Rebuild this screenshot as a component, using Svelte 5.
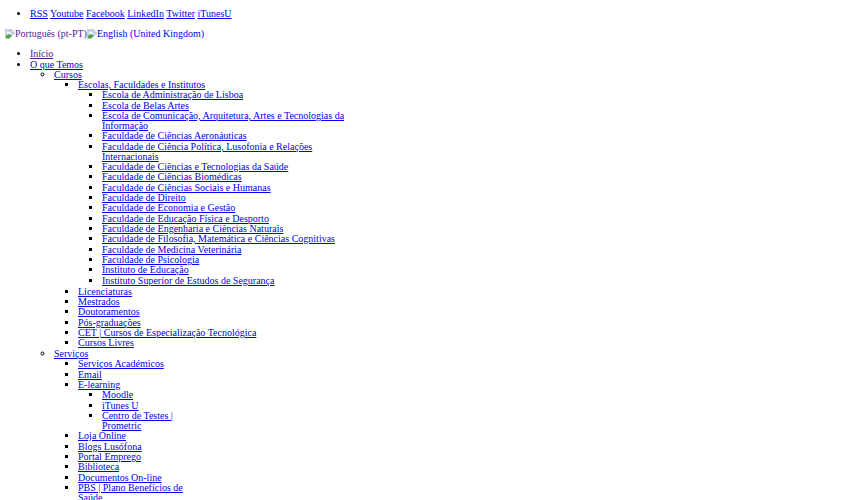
<script>
  const social = ['RSS', 'Youtube', 'Facebook', 'LinkedIn', 'Twitter', 'iTunesU'];

  const languages = [
    { label: 'Português (pt-PT)', current: true },
    { label: 'English (United Kingdom)', current: false }
  ];

  const schools = [
    'Escola de Administração de Lisboa',
    'Escola de Belas Artes',
    'Escola de Comunicação, Arquitetura, Artes e Tecnologias da Informação',
    'Faculdade de Ciências Aeronáuticas',
    'Faculdade de Ciência Política, Lusofonia e Relações Internacionais',
    'Faculdade de Ciências e Tecnologias da Saúde',
    'Faculdade de Ciências Biomédicas',
    'Faculdade de Ciências Sociais e Humanas',
    'Faculdade de Direito',
    'Faculdade de Economia e Gestão',
    'Faculdade de Educação Física e Desporto',
    'Faculdade de Engenharia e Ciências Naturais',
    'Faculdade de Filosofia, Matemática e Ciências Cognitivas',
    'Faculdade de Medicina Veterinária',
    'Faculdade de Psicologia',
    'Instituto de Educação',
    'Instituto Superior de Estudos de Segurança'
  ].map((label) => ({ label }));

  const menu = [
    { label: 'Início', current: true },
    {
      label: 'O que Temos',
      children: [
        {
          label: 'Cursos',
          children: [
            { label: 'Escolas, Faculdades e Institutos', children: schools },
            { label: 'Licenciaturas' },
            { label: 'Mestrados' },
            { label: 'Doutoramentos' },
            { label: 'Pós-graduações' },
            { label: 'CET | Cursos de Especialização Tecnológica' },
            { label: 'Cursos Livres' }
          ]
        },
        {
          label: 'Serviços',
          narrow: true,
          children: [
            { label: 'Serviços Académicos' },
            { label: 'Email' },
            {
              label: 'E-learning',
              children: [
                { label: 'Moodle' },
                { label: 'iTunes U' },
                { label: 'Centro de Testes | Prometric' }
              ]
            },
            { label: 'Loja Online' },
            { label: 'Blogs Lusófona' },
            { label: 'Portal Emprego' },
            { label: 'Biblioteca' },
            { label: 'Documentos On-line' },
            { label: 'PBS | Plano Benefícios de Saúde' }
          ]
        }
      ]
    }
  ];
</script>

{#snippet branch(items)}
  <ul>
    {#each items as item}
      <li class:narrow={item.narrow}>
        <a href="#top" class:visited={item.current}>{item.label}</a>
        {#if item.children}
          {@render branch(item.children)}
        {/if}
      </li>
    {/each}
  </ul>
{/snippet}

<div class="page">
  <ul>
    <li>
      {#each social as name, i}{i ? ' ' : ''}<a href="#top">{name}</a>{/each}
    </li>
  </ul>

  <div class="languages">
    {#each languages as lang}
      <a href="#top" class:visited={lang.current}>
        <svg width="10" height="10" viewBox="0 0 16 16" aria-hidden="true">
          <path d="M1 1h9l5 5v9H1z" fill="#c5d6f5" stroke="#a9adb3" />
          <path d="M3 6.500a2 2 0 0 1 3-1.500 2 2 0 0 1 3 2.500H3z" fill="#fff" />
          <path d="M1.500 14.500V11q3-4 7-2l3 2-5 4z" fill="#4ca641" />
          <path d="M16 7 6 16h10z" fill="#fff" />
          <path d="M10 1v5h5z" fill="#fff" stroke="#a9adb3" />
        </svg><span>{lang.label}</span>
      </a>
    {/each}
  </div>

  <nav aria-label="Menu principal">
    {@render branch(menu)}
  </nav>
</div>

<style>
  :global(body) {
    margin: 0;
    background: #fff;
  }

  .page {
    padding: 9px 5px;
    font: 10px/10px 'Liberation Serif', 'Times New Roman', serif;
    color: #000;
  }

  a {
    color: #0000ee;
    text-decoration: underline;
  }

  a.visited {
    color: #551a8b;
  }

  ul {
    margin: 0;
    padding: 0 0 0 25px;
    list-style: disc;
  }

  li:nth-child(3n + 2) {
    margin-top: 1px;
  }

  ul ul {
    padding-left: 24px;
    list-style: circle;
  }

  ul ul ul {
    list-style: square;
  }

  ul ul ul ul {
    max-width: 250px;
  }

  .narrow > :global(ul) {
    max-width: 115px;
  }

  .languages {
    display: flex;
    margin: 10px 0;
  }

  .languages a {
    display: flex;
    text-decoration: none;
  }
</style>
